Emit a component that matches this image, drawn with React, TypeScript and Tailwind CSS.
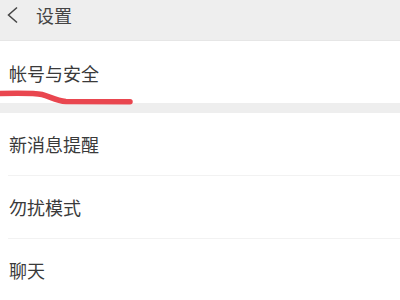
const font = { fontFamily: '"Noto Sans CJK SC", "Noto Sans", sans-serif' };

const rows = ["新消息提醒", "勿扰模式", "聊天"];

export default function App() {
  return (
    <div className="relative w-[400px] h-[300px] overflow-hidden bg-white" style={font}>
      {/* Header */}
      <div className="h-[41px] bg-[#eeeeee] flex items-center pb-[11px] border-b border-[#e6e6e6]">
        <svg width="14" height="20" viewBox="0 0 14 20" className="ml-[5px] mt-[1px]">
          <path d="M12 2.5 L3.5 10 L12 17.5" fill="none" stroke="#444" strokeWidth="1.5" />
        </svg>
        <span className="ml-[17px] text-[18px] leading-none text-[#444]">设置</span>
      </div>

      {/* Account section */}
      <div className="h-[62px] flex items-center pl-[9px] pt-[2px]">
        <span className="text-[18px] leading-none text-[#3a3a3a]">帐号与安全</span>
      </div>

      <div className="h-[10px] bg-[#eeeeee]" />

      {/* Other rows */}
      {rows.map((r) => (
        <div key={r} className="pl-2">
          <div className="h-[63px] flex items-center pl-[1px] border-b border-[#f2f2f2]">
            <span className="text-[18px] leading-none text-[#3a3a3a]">{r}</span>
          </div>
        </div>
      ))}

      {/* Red hand-drawn underline */}
      <svg className="absolute left-0 top-[88px]" width="140" height="20" viewBox="0 0 140 20">
        <path
          d="M-2 5.5 C 20 5, 35 5, 42 6.5 C 50 8.5, 56 13, 66 13.5 L 130 13.8"
          fill="none"
          stroke="#e9464f"
          strokeWidth="5.5"
          strokeLinecap="round"
        />
      </svg>
    </div>
  );
}
